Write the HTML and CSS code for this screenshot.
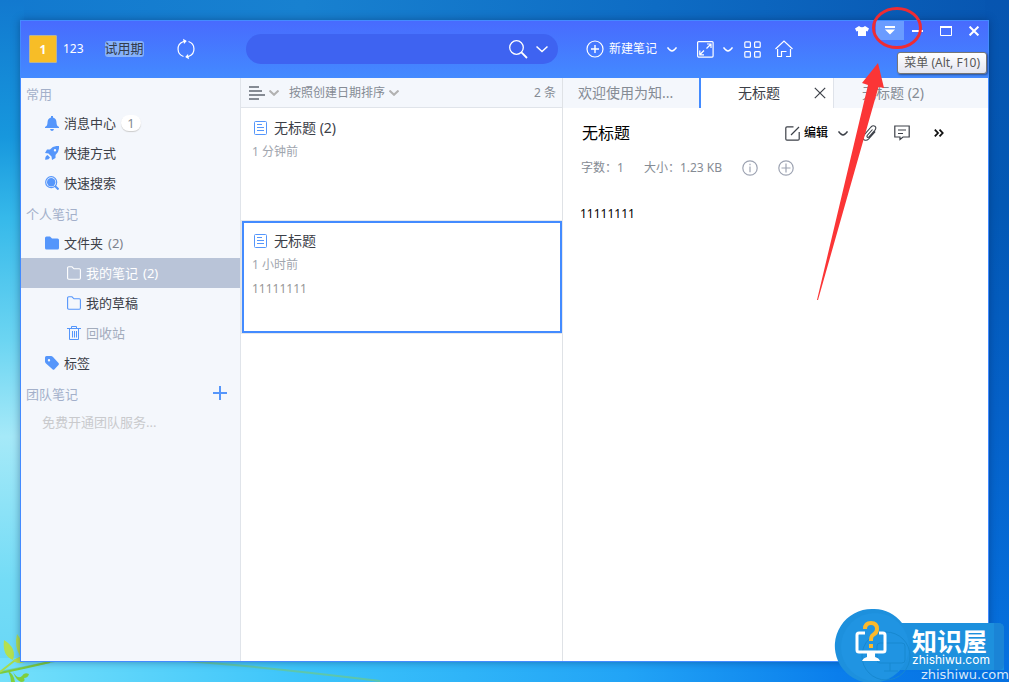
FILE: index.html
```html
<!DOCTYPE html>
<html lang="zh">
<head>
<meta charset="utf-8">
<title>笔记</title>
<link rel="stylesheet" href="styles.css">
</head>
<body>
<svg class="leaf" viewBox="0 0 380 56" aria-hidden="true">
  <path d="M0 46Q30 40 55 35T160 33Q260 40 380 55" fill="none" stroke="#6cc98a" stroke-width="2" opacity=".7"/>
  <path d="M0 47Q20 43 50 36" fill="none" stroke="#7ccb3c" stroke-width="2"/>
  <path d="M0 46L14 35L24 30" fill="none" stroke="#a6dc4c" stroke-width="2"/>
  <path d="M4 14Q17 22 13 34Q2 30 4 14ZM17 8Q26 20 20 30Q14 20 17 8ZM13 35Q20 28 28 34Q22 40 13 35Z" fill="#b4e04e"/>
  <path d="M8 45Q14 48 15 56H11Q11 51 8 45ZM13 46Q18 54 22 50Q24 46 29 48Q28 52 24 52Q26 56 21 56Q16 54 13 46Z" fill="#7fcf3c"/>
</svg>

<div class="window">
  <header class="titlebar">
    <div class="user">
      <span class="avatar">1</span>
      <span class="user-name">123</span>
      <span class="trial">试用期</span>
      <button class="icon-btn sync" aria-label="同步">
        <svg width="20" height="22" viewBox="0 0 20 22" fill="none" stroke="#fff" stroke-width="1.2"><path d="M7.500 18.500A7.800 7.800 0 0 1 7 3.800L9.500 3M12.500 3.500A7.800 7.800 0 0 1 13 18.200L10.500 19"/><path d="M7 .8L10.800 3L8 6ZM13 21.200L9.200 19L12 16Z" fill="#fff" stroke="none"/></svg>
      </button>
    </div>
    <div class="search-cell">
      <div class="search">
        <input type="text" aria-label="搜索">
        <button class="icon-btn" aria-label="搜索"><svg width="19" height="19" viewBox="0 0 19 19" fill="none" stroke="#fff" stroke-width="1.300"><circle cx="7.500" cy="7.500" r="6.800"/><path d="M12.200 12.200L18 18" stroke-width="1.800"/></svg></button>
        <button class="icon-btn" aria-label="搜索选项"><svg width="12" height="8" viewBox="0 0 12 8" fill="none" stroke="#fff" stroke-width="1.500"><path d="M.5 1.500L6 6.500L11.500 1.500"/></svg></button>
      </div>
    </div>
    <div class="tools">
      <button class="icon-btn new"><svg width="18" height="18" viewBox="0 0 18 18" fill="none" stroke="#fff" stroke-width="1.200"><circle cx="9" cy="9" r="8"/><path d="M5 9H13M9 5V13" stroke-width="1.400"/></svg>新建笔记</button>
      <button class="icon-btn chev-a" aria-label="新建选项"><svg width="10" height="7" viewBox="0 0 10 7" fill="none" stroke="#fff" stroke-width="1.500"><path d="M.5 1.500Q3 5 5 5Q7 5 9.500 1.500"/></svg></button>
      <button class="icon-btn expand" aria-label="展开"><svg width="17" height="17" viewBox="0 0 17 17" fill="none" stroke="#fff" stroke-width="1.200"><rect x=".6" y=".6" width="15.500" height="15.500" rx="1"/><path d="M9.500 7.500L13.500 3.500M10 3H14V7M7 9.500L3 13.500M2.800 9.500V13.800H7"/></svg></button>
      <button class="icon-btn chev-b" aria-label="展开选项"><svg width="10" height="7" viewBox="0 0 10 7" fill="none" stroke="#fff" stroke-width="1.500"><path d="M.5 1.500Q3 5 5 5Q7 5 9.500 1.500"/></svg></button>
      <button class="icon-btn apps" aria-label="应用"><svg width="17" height="17" viewBox="0 0 17 17" fill="none" stroke="#fff" stroke-width="1.200"><rect x=".8" y=".8" width="5.600" height="5.600" rx="1"/><rect x="10.600" y=".8" width="5.600" height="5.600" rx="1"/><rect x=".8" y="10.600" width="5.600" height="5.600" rx="1"/><rect x="10.600" y="10.600" width="5.600" height="5.600" rx="1"/></svg></button>
      <button class="icon-btn home" aria-label="主页"><svg width="18" height="18" viewBox="0 0 18 18" fill="none" stroke="#fff" stroke-width="1.200"><path d="M.5 9L9 1L17.500 9M2.600 9V16.500H6.500V11.500H11.500M11 16.500H15.500V9"/></svg></button>
    </div>
    <div class="win-controls">
      <button aria-label="换肤"><svg width="14" height="10" viewBox="0 0 14 10" fill="#fff"><path d="M4 0Q7 2.500 10 0L14 2.500L12.500 5.500L11 5V10H3V5L1.500 5.500L0 2.500Z"/></svg></button>
      <button class="active" aria-label="菜单"><svg width="10" height="9" viewBox="0 0 10 9" fill="#fff"><path d="M0 0H10V2H0ZM0 3.500H10L5 8.500Z"/></svg></button>
      <button aria-label="最小化"><svg width="12" height="10" viewBox="0 0 12 10"><path d="M0 4H11V6H0Z" fill="#fff"/></svg></button>
      <button aria-label="最大化"><svg width="12" height="10" viewBox="0 0 12 10" fill="none" stroke="#fff"><path d="M.5 1V9.500H11.500V1" /><path d="M0 1H12" stroke-width="2"/></svg></button>
      <button aria-label="关闭"><svg width="10" height="10" viewBox="0 0 10 10" stroke="#fff" stroke-width="2"><path d="M.6 .6L9.400 9.400M9.400 .6L.6 9.400"/></svg></button>
    </div>
    <div class="tooltip" role="tooltip">菜单 (Alt, F10)</div>
  </header>

  <nav class="sidebar">
    <h2>常用</h2>
    <a href="#" class="item"><svg width="14" height="15" viewBox="0 0 14 15" fill="#5596fb"><path d="M6 0H8V1.500Q11.500 2.500 11.500 6.500Q11.500 10 14 11V12H0V11Q2.500 10 2.500 6.500Q2.500 2.500 6 1.500ZM5 13H9Q8.500 15 7 15T5 13Z"/></svg>消息中心<span class="count">1</span></a>
    <a href="#" class="item"><svg width="14" height="14" viewBox="0 0 14 14" fill="#5596fb"><path fill-rule="evenodd" d="M14 0Q14.500 6 10.500 9V12L7 14L6.500 10.500L3.500 7.500L0 7L2 3.500H5Q8 -.5 14 0ZM10 3A1.200 1.200 0 1 0 10 5.400A1.200 1.200 0 0 0 10 3Z"/><path d="M2.500 9L5 11.500Q4 14 .2 13.800Q0 10 2.500 9Z"/></svg>快捷方式</a>
    <a href="#" class="item"><svg width="14" height="14" viewBox="0 0 14 14"><circle cx="6.200" cy="6.200" r="5.500" fill="none" stroke="#5596fb" stroke-width="1.200"/><circle cx="6.200" cy="6.200" r="4.200" fill="#5596fb"/><path d="M10 10L13.500 13.500" stroke="#5596fb" stroke-width="2"/></svg>快速搜索</a>
    <h2>个人笔记</h2>
    <a href="#" class="item"><svg width="14" height="14" viewBox="0 0 14 14" fill="#5596fb"><path d="M0 2Q0 .5 1.500 .5H5L7 2.500H12.500Q14 2.500 14 4V12Q14 13.500 12.500 13.500H1.500Q0 13.500 0 12Z"/></svg>文件夹<span class="num">(2)</span></a>
    <a href="#" class="item sub selected"><svg width="14" height="14" viewBox="0 0 14 14" fill="none" stroke="#fff" stroke-width="1.100"><path d="M.6 2Q.6 .8 1.800 .8H5L7 2.800H12.400Q13.400 2.800 13.400 4V12Q13.400 13.200 12.400 13.200H1.800Q.6 13.200 .6 12Z"/></svg>我的笔记<span class="num">(2)</span></a>
    <a href="#" class="item sub"><svg width="14" height="14" viewBox="0 0 14 14" fill="none" stroke="#5596fb" stroke-width="1.100"><path d="M.6 2Q.6 .8 1.800 .8H5L7 2.800H12.400Q13.400 2.800 13.400 4V12Q13.400 13.200 12.400 13.200H1.800Q.6 13.200 .6 12Z"/></svg>我的草稿</a>
    <a href="#" class="item sub muted"><svg width="14" height="14" viewBox="0 0 14 14" fill="none" stroke="#5596fb"><path d="M0 2.500H14M4.500 2.500V.5H9.500V2.500M2.500 2.500V13.500H11.500V2.500M5.500 5V11.500M7.500 5V11.500M9.500 5V11.500"/></svg>回收站</a>
    <a href="#" class="item"><svg width="14" height="14" viewBox="0 0 14 14" fill="#5596fb"><path fill-rule="evenodd" d="M0 1.500Q0 0 1.500 0H6Q7 0 8 1L13.500 7Q14.300 8 13.500 9L9.500 13.300Q8.500 14.300 7.500 13.300L1 7.500Q0 6.500 0 5.500ZM4 3A1.200 1.200 0 1 0 4 5.400A1.200 1.200 0 0 0 4 3Z"/></svg>标签</a>
    <div class="team"><h2>团队笔记</h2><button class="icon-btn" aria-label="添加团队"><svg width="14" height="14" viewBox="0 0 14 14" stroke="#5596fb" stroke-width="2"><path d="M0 7H14M7 0V14"/></svg></button></div>
    <a href="#" class="team-hint">免费开通团队服务...</a>
  </nav>

  <section class="list">
    <div class="list-head">
      <button class="icon-btn view" aria-label="视图"><svg width="16" height="14" viewBox="0 0 16 14" fill="#858b94"><path d="M0 0H10V2H0ZM0 4H13V6H0ZM0 8H16V10H0ZM0 12H10V14H0Z"/></svg><svg width="10" height="6" viewBox="0 0 10 6" fill="none" stroke="#b2b2b2" stroke-width="2"><path d="M.5 .5L5 4.800L9.500 .5"/></svg></button>
      <button class="icon-btn sort">按照创建日期排序<svg width="10" height="6" viewBox="0 0 10 6" fill="none" stroke="#b2b2b2" stroke-width="2"><path d="M.5 .5L5 4.800L9.500 .5"/></svg></button>
      <span class="total">2 条</span>
    </div>
    <div class="cards">
      <article class="card">
        <h3><svg width="13" height="14" viewBox="0 0 13 14" fill="none" stroke="#5596fb"><rect x=".5" y=".5" width="12" height="13" rx="1"/><path d="M3 3.500H8M3 6.500H10M3 9.500H10"/></svg>无标题 (2)</h3>
        <p class="time">1 分钟前</p>
      </article>
      <article class="card current">
        <h3><svg width="13" height="14" viewBox="0 0 13 14" fill="none" stroke="#5596fb"><rect x=".5" y=".5" width="12" height="13" rx="1"/><path d="M3 3.500H8M3 6.500H10M3 9.500H10"/></svg>无标题</h3>
        <p class="time">1 小时前</p>
        <p class="preview">11111111</p>
      </article>
    </div>
  </section>

  <main class="editor">
    <div class="tabs">
      <button class="tab first">欢迎使用为知...</button>
      <div class="tab open"><button class="tab-name">无标题</button><button class="icon-btn" aria-label="关闭标签"><svg width="12" height="12" viewBox="0 0 12 12" stroke="#3c4048" stroke-width="1.200"><path d="M.8 .8L11.200 11.200M11.200 .8L.8 11.200"/></svg></button></div>
      <button class="tab last">无标题 (2)</button>
    </div>
    <div class="title-row">
      <h1>无标题</h1>
      <div class="actions">
        <button class="icon-btn edit"><svg width="15" height="15" viewBox="0 0 15 15" fill="none" stroke="#3c4048" stroke-width="1.200"><path d="M8.500 .8H2Q.8 .8 .8 2V13Q.8 14.200 2 14.200H13Q14.200 14.200 14.200 13V6M6 9L14 1"/></svg>编辑</button>
        <button class="icon-btn more-edit" aria-label="编辑选项"><svg width="10" height="7" viewBox="0 0 10 7" fill="none" stroke="#3c4048" stroke-width="1.500"><path d="M.5 1.500Q3 5 5 5Q7 5 9.500 1.500"/></svg></button>
        <button class="icon-btn clip" aria-label="附件"><svg width="15" height="16" viewBox="0 0 15 16" fill="none" stroke="#3c4048" stroke-width="1.100"><path d="M10.500 4.500L5.200 10.500Q4.500 12 5.700 12.400Q6.500 12.500 7.200 11.700L12.800 5.300Q14.800 2.600 12.900 1.200Q10.900 0 9 2L2.200 9.800Q-.2 13 2 14.700Q4.500 16.200 6.700 13.900L13.200 6.600"/></svg></button>
        <button class="icon-btn comment" aria-label="评论"><svg width="16" height="16" viewBox="0 0 16 16" fill="none" stroke="#3c4048" stroke-width="1.200"><path d="M.8 1H15.200V12H9L6 14.500V12H.8ZM4 5H12M4 8.500H9"/></svg></button>
        <button class="icon-btn more" aria-label="更多"><svg width="10" height="8" viewBox="0 0 10 8" fill="none" stroke="#111" stroke-width="1.800"><path d="M.8 .6L4 4L.8 7.400M5.500 .6L8.700 4L5.500 7.400"/></svg></button>
      </div>
    </div>
    <div class="meta">
      <span>字数：1</span><span>大小：1.23 KB</span>
      <button class="icon-btn" aria-label="信息"><svg width="16" height="16" viewBox="0 0 16 16" fill="none" stroke="#9da3b2" stroke-width="1.200"><circle cx="8" cy="8" r="7.200"/><path d="M8 3.800V5.200M8 6.500V12.200"/></svg></button>
      <button class="icon-btn" aria-label="添加"><svg width="16" height="16" viewBox="0 0 16 16" fill="none" stroke="#9da3b2" stroke-width="1.200"><circle cx="8" cy="8" r="7.200"/><path d="M3.500 8H12.500M8 3.500V12.500"/></svg></button>
    </div>
    <p class="content">11111111</p>
  </main>
</div>

<svg class="pointer" viewBox="0 0 130 304" aria-hidden="true">
  <ellipse cx="37" cy="28" rx="23.500" ry="19.500" fill="none" stroke="#ee2c33" stroke-width="3"/>
  <path d="M18 63L24 88L18.500 87L-42 300L-43 300L8 85L2 83Z" fill="#fb3536"/>
</svg>

<div class="brand">
  <svg class="brand-shape" viewBox="0 0 175 73" aria-hidden="true">
    <path d="M38 0A37 37 0 0 1 68 14H164Q170 14 170 20V61H66A37 37 0 1 1 38 0Z" fill="#1d90dd"/>
    <circle cx="41" cy="38" r="34" fill="#2094e2"/>
    <path d="M160 14H164Q170 14 170 20V55Q170 61 164 61H160Z" fill="#1a84d6"/>
    <g fill="none" stroke="#1788d0"><circle cx="52" cy="47" r="24"/><rect x="43" y="34" width="28" height="20" rx="3"/><path d="M56 54V62M50 62H64"/></g>
    <path d="M31 24H25Q23 24 23 26V41Q23 43 25 43H49Q51 43 51 41V26Q51 24 49 24H45" fill="none" stroke="#fff" stroke-width="3"/>
    <path d="M33 43H41V48Q45 49 46 52H28Q29 49 33 48Z" fill="#fff"/>
    <path d="M31 20Q31 14 37 14Q43 14 43 20Q43 24 39 26Q37 27 37 32M37 35V39" fill="none" stroke="#fbb92d" stroke-width="4"/>
  </svg>
  <div class="brand-text"><strong>知识屋</strong><span>zhishiwu.com</span></div>
  <small>zhishiwu.com</small>
</div>
</body>
</html>
```
FILE: styles.css
```css
* { box-sizing: border-box; }

body {
  margin: 0;
  min-height: 100vh;
  padding: 20px;
  display: grid;
  position: relative;
  overflow: hidden;
  font: 12px/20px "Noto Sans", "Noto Sans CJK SC", sans-serif;
  color: #3c4048;
  background:
    linear-gradient(90deg, #74e0fa, #3cc4fa 30%, #22a4f6 62%, #0a7eec 83%, #0670e0) bottom / 100% 24px no-repeat,
    linear-gradient(#0755b0, #0358b4 30%, #0561c8 60%, #0672e0) right / 24px 100% no-repeat,
    linear-gradient(#1279cf, #1797dd 20%, #36b9ea 32%, #6cd5f2 50%, #a5e9f8 64%, #74dcf6 85%, #66d6f6) left / 24px 100% no-repeat,
    linear-gradient(90deg, #1279cf, #1881d0 30%, #0e6cc4 65%, #0755b0);
}

h1, h2, h3, p { margin: 0; font-weight: 400; }
a { color: inherit; text-decoration: none; }
svg { display: block; flex: none; }
button { border: 0; padding: 0; background: none; font: inherit; color: inherit; }
.icon-btn { display: flex; align-items: center; flex: none; }

.leaf { position: absolute; left: 0; bottom: 0; width: 380px; height: 56px; }

.window {
  position: relative;
  display: grid;
  grid-template: 57px 1fr / 220px 322px 1fr;
  border: 1px solid #438bff;
  background: #fff;
  box-shadow: 0 0 8px rgba(0, 30, 80, .4);
}

.titlebar {
  grid-column: 1 / -1;
  position: relative;
  display: grid;
  grid-template-columns: 220px 322px 1fr auto;
  align-items: center;
  padding-bottom: 1px;
  background: linear-gradient(#486bfe, #438aff);
  color: #fff;
}
.user { display: flex; align-items: center; padding-left: 8px; }
.avatar {
  width: 28px; height: 28px; line-height: 27px;
  border: 1px solid #b5b29a;
  border-radius: 1px;
  background: #f7bd27;
  text-align: center;
  font-weight: 700;
}
.user-name { margin-left: 6px; }
.trial {
  margin-left: 21px;
  height: 16px; line-height: 14px;
  border-radius: 3px;
  background: #86b1fb;
  color: #333c4c;
  font-size: 13px;
}
.sync { margin-left: 32px; }
.search-cell { padding: 0 5px; }
.search {
  display: flex; align-items: center; gap: 8px;
  height: 30px;
  padding-right: 10px;
  border-radius: 15px;
  background: #3e63f1;
}
.search input {
  flex: 1; min-width: 0;
  border: 0; outline: 0;
  padding: 0 16px;
  background: none;
  color: #fff; font: inherit;
}
.tools { display: flex; align-items: center; padding-left: 23px; }
.new { gap: 5px; }
.chev-a { margin-left: 10px; }
.expand { margin-left: 20px; }
.chev-b { margin-left: 9px; }
.apps { margin-left: 11px; }
.home { margin-left: 14px; }
.win-controls { display: flex; align-self: start; }
.win-controls button { width: 28px; height: 19px; display: grid; place-items: center; }
.win-controls .active { background: #6a9cff; }
.tooltip {
  position: absolute; z-index: 2;
  right: 1px; top: 31px;
  padding: 0 6px;
  border: 1px solid #767676;
  border-radius: 3px;
  background: linear-gradient(#fff, #e4e5f0);
  color: #575757;
  box-shadow: 1px 1px 2px rgba(0, 0, 0, .4);
}

.sidebar {
  background: #f4f7fc;
  border-right: 1px solid #e0e4ea;
  font-size: 13px;
}
.sidebar h2 { height: 30px; padding: 4px 5px 0; line-height: 24px; font-size: 13px; color: #a3b0ca; }
.item { display: flex; align-items: center; gap: 5px; height: 30px; padding-left: 24px; color: #3c4048; }
.item.sub { padding-left: 46px; }
.item.selected { background: #b9c4d8; color: #fff; }
.item.muted { color: #a3acbc; }
.num { color: #7d828c; }
.selected .num { color: #fff; }
.count {
  width: 20px; height: 16px; line-height: 16px;
  border-radius: 8px;
  background: #fff;
  box-shadow: 0 1px 1px #ccc;
  text-align: center;
  color: #858b94;
}
.team { display: flex; justify-content: space-between; padding-right: 13px; }
.team-hint { display: block; padding-left: 21px; line-height: 28px; color: #c9cacd; }

.list { border-right: 1px solid #dfe2e6; min-width: 0; }
.list-head {
  display: flex; align-items: center; gap: 10px;
  height: 30px;
  padding: 0 6px 0 8px;
  background: #f4f7fc;
  border-bottom: 1px solid #e0e4ea;
  color: #858b94;
}
.view, .sort { gap: 4px; }
.total { margin-left: auto; }
.cards { display: grid; gap: 1px; padding-left: 1px; }
.card { height: 112px; padding: 6px 8px; border: 2px solid transparent; line-height: 24px; }
.card.current { border-color: #438bff; outline: 1px solid #e6e8ec; }
.card h3 { display: flex; align-items: center; gap: 7px; padding-left: 2px; font-size: 14px; }
.time { color: #a0a5ae; }
.preview { color: #979797; }

.editor { min-width: 0; overflow: hidden; }
.tabs { display: flex; height: 30px; font-size: 14px; background: #f4f7fc; color: #858b94; }
.tab { display: flex; align-items: center; white-space: nowrap; }
.tab.first { width: 138px; padding-left: 15px; border-right: 2px solid #438bff; }
.tab.open { width: 133px; justify-content: space-between; padding: 0 7px 0 37px; border-right: 1px solid #dfe3ea; background: #fff; color: #3c4048; }
.tab.last { flex: 1; padding-left: 28px; }
.title-row { display: flex; align-items: center; justify-content: space-between; height: 50px; padding: 0 44px 0 19px; }
h1 { font-size: 16px; color: #000; }
.actions { display: flex; align-items: center; }
.edit { gap: 4px; color: #000; font-weight: 500; }
.more-edit { margin-left: 10px; }
.clip { margin-left: 14px; }
.comment { margin-left: 17px; }
.more { margin-left: 24px; }
.meta {
  display: flex; align-items: center; gap: 20px;
  padding: 0 18px;
  font-family: "Noto Sans", "Noto Sans CJK TC", sans-serif;
  color: #858b94;
}
.content { padding: 26px 17px; font-size: 12px; color: #000; }

.pointer { position: absolute; z-index: 3; right: 19px; top: 0; width: 130px; height: 304px; overflow: visible; pointer-events: none; }

.brand { position: absolute; z-index: 3; right: 0; bottom: 0; width: 175px; height: 73px; color: #fff; }
.brand-shape { width: 175px; height: 73px; }
.brand-text { position: absolute; left: 78px; top: 16px; display: grid; }
.brand-text strong { font: 700 25px/30px "Noto Sans CJK SC", sans-serif; }
.brand-text span { font: 12px/10px Inter, sans-serif; }
.brand small { position: absolute; right: 0; bottom: 0; font: 13px/14px "DejaVu Sans", sans-serif; color: #d7e8f8; }
```
